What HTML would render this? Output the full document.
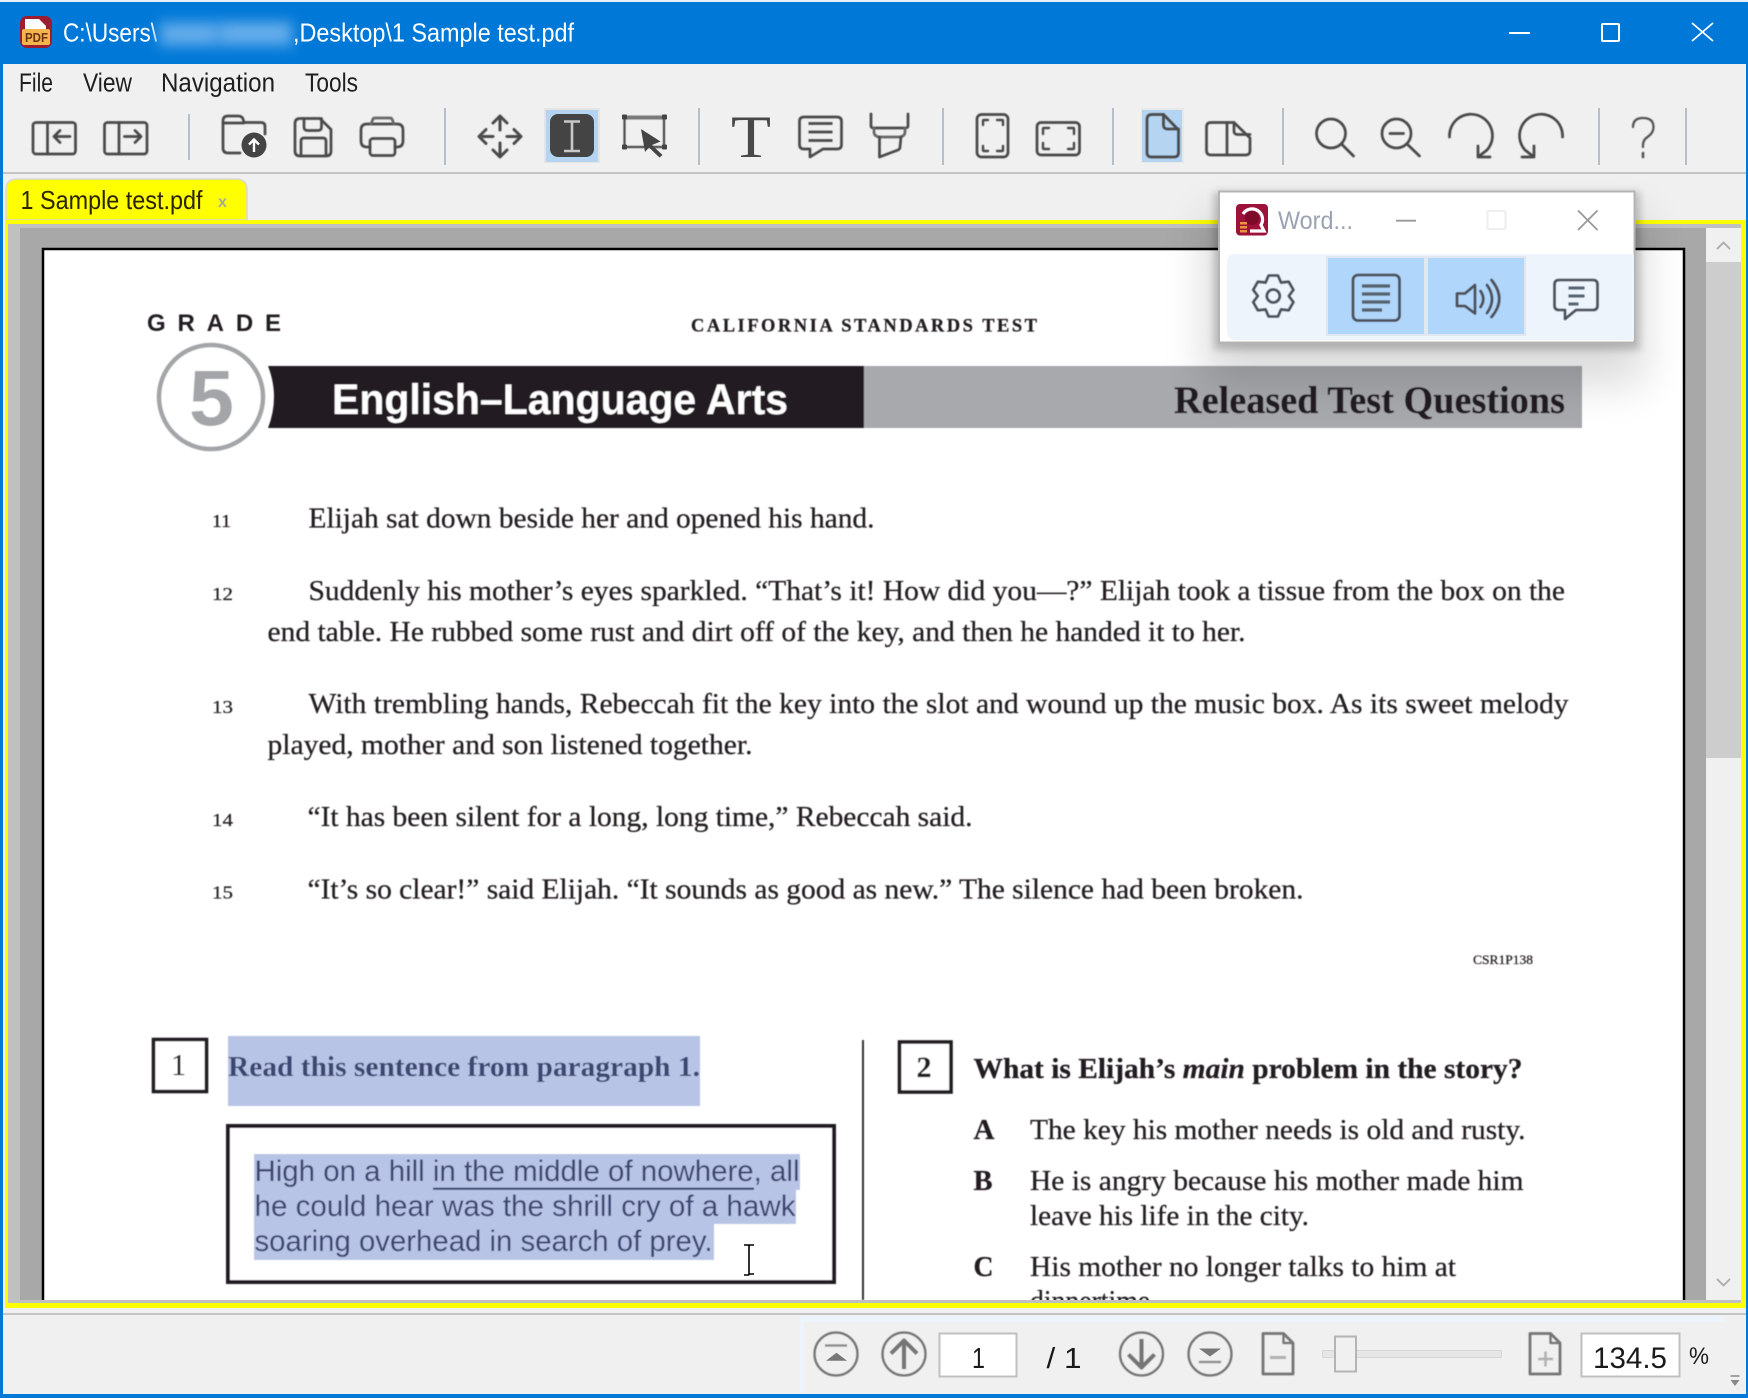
<!DOCTYPE html>
<html lang="en">
<head>
<meta charset="utf-8">
<title>1 Sample test.pdf</title>
<style>
html,body{margin:0;padding:0;width:1748px;height:1398px;overflow:hidden;background:#f0f0f0}
svg{display:block}
.ui{font-family:"Liberation Sans",sans-serif}
.se{font-family:"Liberation Serif",serif;fill:#231f20;stroke:#231f20;stroke-width:.25}
.sa{font-family:"Liberation Sans",sans-serif;fill:#231f20}
.ic{fill:none;stroke:#484848;stroke-width:2.7;stroke-linejoin:round;stroke-linecap:round}
.st{fill:none;stroke:#747474;stroke-width:2.3;stroke-linejoin:round}
.sep{stroke:#b6bfc9;stroke-width:2}
</style>
</head>
<body>
<svg xmlns="http://www.w3.org/2000/svg" width="1748" height="1398" viewBox="0 0 1748 1398">
<defs>
<filter id="b0" x="-5%" y="-5%" width="110%" height="110%"><feGaussianBlur stdDeviation="0.45"/></filter>
<filter id="b1" x="-20%" y="-20%" width="140%" height="140%"><feGaussianBlur stdDeviation="0.55"/></filter>
<filter id="b7" x="-20%" y="-50%" width="140%" height="200%"><feGaussianBlur stdDeviation="6"/></filter>
<filter id="b20" x="-30%" y="-50%" width="160%" height="200%"><feGaussianBlur stdDeviation="22"/></filter>
<filter id="b4" x="-10%" y="-20%" width="120%" height="140%"><feGaussianBlur stdDeviation="4"/></filter>
<clipPath id="view"><rect x="20" y="228" width="1686" height="1072"/></clipPath>
</defs>

<!-- window frame -->
<rect width="1748" height="1398" fill="#0078d7"/>
<rect x="3" y="64" width="1743" height="1330" fill="#f0f0f0"/>
<rect x="0" y="0" width="1748" height="2" fill="#e8f1fa"/>

<!-- title bar -->
<g>
<rect x="20" y="16" width="32" height="32" rx="7" fill="#9c1c30"/>
<path d="M25 19h14l7 7v6H25z" fill="#fff"/>
<rect x="22" y="29" width="28" height="16" rx="2" fill="#f5b44c"/>
<text class="ui" x="25" y="42" font-size="13" font-weight="700" fill="#6a3410" textLength="23" lengthAdjust="spacingAndGlyphs">PDF</text>
</g>
<text class="ui" x="63" y="41.5" font-size="26" fill="#fff" textLength="94" lengthAdjust="spacingAndGlyphs">C:\Users\</text>
<g filter="url(#b7)">
<rect x="158" y="20" width="136" height="28" fill="#3a98e4"/>
<rect x="165" y="27" width="50" height="14" fill="#66aeea"/>
<rect x="222" y="25" width="66" height="16" fill="#66aeea"/>
</g>
<text class="ui" x="293" y="41.5" font-size="26" fill="#fff" textLength="281" lengthAdjust="spacingAndGlyphs">,Desktop\1 Sample test.pdf</text>
<path d="M1509 33h21" stroke="#fff" stroke-width="2"/>
<rect x="1602" y="24" width="17" height="17" fill="none" stroke="#fff" stroke-width="2" rx="1"/>
<path d="M1692 23l21 18M1713 23l-21 18" stroke="#fff" stroke-width="1.8" fill="none"/>

<!-- menu -->
<g class="ui" font-size="25.5" fill="#1e1e1e">
<text x="19" y="91.5" textLength="34" lengthAdjust="spacingAndGlyphs">File</text>
<text x="83" y="91.5" textLength="49" lengthAdjust="spacingAndGlyphs">View</text>
<text x="161" y="91.5" textLength="114" lengthAdjust="spacingAndGlyphs">Navigation</text>
<text x="305" y="91.5" textLength="53" lengthAdjust="spacingAndGlyphs">Tools</text>
</g>

<!-- toolbar separators -->
<path class="sep" d="M189 114V160M445 108V165M699 108V165M943 108V165M1113 108V165M1283 108V165M1599 108V165M1686 108V165"/>
<rect x="3" y="172" width="1743" height="2" fill="#c4c4c4"/>

<!-- panel icons -->
<g class="ic" filter="url(#b0)">
<rect x="33" y="122.5" width="42.5" height="31.5" rx="3"/>
<path d="M47.5 122.5V154"/>
<path d="M70 136.5H54M60 130.5l-6 6 6 6"/>
<rect x="104.500" y="122.5" width="42.500" height="31.500" rx="3"/>
<path d="M119 122.5V154"/>
<path d="M124.500 136.500H141M135 130.500l6 6-6 6"/>
<!-- folder -->
<path d="M240 153H228q-5 0-5-5V121q0-5 5-5h10q4 0 5 3l1 3.500h17q4 0 4 4V134"/>
<path d="M223 123h21"/>
<!-- save -->
<path d="M300 118.500h20l11 11V151q0 5-5 5H300q-5 0-5-5V123.500q0-5 5-5z"/>
<path d="M304 118.500V127q0 3.500 3.500 3.500h10.500q3.500 0 3.500-3.500V118.500"/>
<path d="M301 155.500V141q0-3 3-3h19q3 0 3 3V155.500"/>
<!-- print -->
<path d="M370 147h-3q-6 0-6-6v-11q0-6 6-6h30q6 0 6 6v11q0 6-6 6h-2"/>
<path d="M371 124l2-5q.5-1 2-1h15q1.500 0 2 1l2 5" stroke="#666"/>
<rect x="370" y="138.500" width="25" height="17" rx="3"/>
<!-- move -->
<path d="M500 120V130M500 143V155M483 136.500H493M507 136.500H518" stroke-width="3"/>
<path d="M493 123l7-7 7 7M493 150l7 7 7-7M486 129.500l-7 7 7 7M514 129.500l7 7-7 7" stroke-width="3"/>
<!-- select -->
<path d="M624.500 117H664V147H624.500Z" stroke-width="2.2"/>
<path d="M625 117.500H664" stroke="#777" stroke-width="4"/>
<!-- chat -->
<path d="M804 117h33q4.500 0 4.500 4.500v23q0 4.500-4.500 4.500h-14l-13 8v-8h-6q-4.500 0-4.500-4.500v-23q0-4.500 4.500-4.500z"/>
<path d="M808.500 123.500h24M808.500 132h24M808.500 140.500h24" stroke-width="2.800" stroke-linecap="butt"/>
<!-- highlighter -->
<path d="M871 114V126q0 2 3 2H905q3 0 3-2V114"/>
<path d="M874 128v4q0 4 5 5H900q5-1 5-5v-4" stroke="#666"/>
<path d="M879.500 137V157L898 150q2-1 2-3l1-10" />
<!-- fit page -->
<rect x="977" y="114.500" width="31" height="42.500" rx="4.500"/>
<path d="M983 125v-4q0-1 1-1h4M997 120h5q1 0 1 1v4M983 146v4q0 1 1 1h4M997 151h5q1 0 1-1v-4" stroke-width="2.400"/>
<!-- fit width -->
<rect x="1037" y="122.500" width="42.500" height="32.500" rx="4"/>
<path d="M1043 134v-5q0-1 1-1h5M1068 128h5q1 0 1 1v5M1043 143v5q0 1 1 1h5M1068 149h5q1 0 1-1v-5" stroke-width="2.400"/>
</g>
<circle cx="254" cy="145" r="12.500" fill="#444"/>
<path d="M254 152v-12M249 144.500l5-5 5 5" stroke="#fff" stroke-width="2.400" fill="none"/>

<!-- I tool -->
<rect x="544" y="108" width="56" height="55" fill="#e4e4e4"/>
<rect x="546" y="110" width="52" height="52" fill="#b4d4f2"/>
<rect x="550" y="114" width="44" height="43" rx="8" fill="#444"/>
<path d="M564 121.500h16M564 151h16M572 121.500V151" stroke="#c8c8c8" stroke-width="2.600" fill="none"/>
<!-- select arrow + handles -->
<path d="M641 129L660.500 141.500 652 145 662.500 155 659.500 157.500 649 147.500 645 152z" fill="#444"/>
<g fill="#444"><rect x="622" y="114.500" width="5" height="5" rx="1"/><rect x="662" y="114.500" width="5" height="5" rx="1"/><rect x="622" y="144.500" width="5" height="5" rx="1"/><rect x="662" y="144.500" width="5" height="5" rx="1"/></g>
<!-- T -->
<text x="731" y="157" font-family="Liberation Serif,serif" font-size="60" fill="#484848" textLength="40" lengthAdjust="spacingAndGlyphs">T</text>

<!-- single page -->
<rect x="1141" y="108" width="43" height="55" fill="#e6e8ea"/>
<rect x="1142" y="110" width="40" height="52" fill="#b4d4f2"/>
<g class="ic" filter="url(#b0)">
<path d="M1152 114.500h11.500L1178.500 130v22.500q0 4.500-4.500 4.500H1151.500q-4.500 0-4.500-4.500V119.500q0-5 5-5z"/>
<path d="M1163.500 114.500V125q0 4 4 4h11"/>
<!-- double page -->
<path d="M1211 122.500h23L1250 138v12.500q0 4.500-4.500 4.500H1211q-4.500 0-4.500-4.500V127q0-4.500 4.500-4.500z"/>
<path d="M1227 122.500V155"/>
<path d="M1234 122.500V131q0 3.500 3.500 3.500H1250"/>
<!-- zoom in/out -->
<circle cx="1331" cy="133.500" r="14.500"/><path d="M1341.500 144L1353.500 156"/>
<circle cx="1396.500" cy="133.500" r="14.500"/><path d="M1407 144L1419.500 156M1390 133.500h13.500"/>
<!-- rotate -->
<path d="M1449.500 137A21.500 21.500 0 1 1 1487 150L1478 157M1478 146V157H1490"/>
<path d="M1562.500 137A21.500 21.500 0 1 0 1525 150L1534 157M1534 146V157H1522"/>
<!-- help -->
<path d="M1633 127q0-9 10-9 10.500 0 10.500 9 0 6-6 10-4.500 3-4.500 8v2" stroke="#555" stroke-width="2.300"/>
<path d="M1643 153v4" stroke="#555" stroke-width="2.600"/>
</g>

<!-- tab -->
<path d="M6 220V190q0-11 11-11H236q11 0 11 11v30z" fill="#ffff00" stroke="#d8d8d8" stroke-width="1.500"/>
<text class="ui" x="20.500" y="209" font-size="26" fill="#2a2400" textLength="182" lengthAdjust="spacingAndGlyphs">1 Sample test.pdf</text>
<text class="ui" x="218" y="207" font-size="16" font-weight="700" fill="#a8a898" textLength="9" lengthAdjust="spacingAndGlyphs">x</text>

<!-- document frame -->
<rect x="5" y="220" width="1741" height="88" fill="#ffff00"/>
<rect x="5" y="220" width="3" height="1088" fill="#ffff00"/>
<rect x="1741" y="220" width="5" height="1088" fill="#ffff00"/>
<rect x="5" y="1303" width="1741" height="5" fill="#ffff00"/>
<rect x="8" y="224" width="1733" height="1079" fill="#c0c0c0"/>
<rect x="20" y="228" width="1686" height="1072" fill="#a8a8a8"/>

<!-- scrollbar -->
<rect x="1706" y="228" width="35" height="1072" fill="#f0f0f0"/>
<rect x="1706" y="262" width="35" height="496" fill="#cdcdcd"/>
<path d="M1717 249l6.500-6.500 6.500 6.500" fill="none" stroke="#b0b0b0" stroke-width="2"/>
<path d="M1717 1279l6.500 6.500 6.500-6.500" fill="none" stroke="#b0b0b0" stroke-width="2"/>

<!-- page -->
<g clip-path="url(#view)">
<rect x="43" y="249" width="1641" height="1100" fill="#fff" stroke="#000" stroke-width="2.500"/>
<g filter="url(#b1)">
<text class="sa" x="147" y="331" font-size="24" font-weight="700" textLength="134" lengthAdjust="spacing">GRADE</text>
<text class="se" x="691" y="331.500" font-size="18.500" font-weight="700" textLength="346" lengthAdjust="spacing">CALIFORNIA STANDARDS TEST</text>

<circle cx="211" cy="397" r="52" fill="#fff" stroke="#a3a5a8" stroke-width="4.500"/>
<text x="189" y="425" font-family="Liberation Sans,sans-serif" font-size="79" font-weight="700" fill="#a3a5a8" textLength="45" lengthAdjust="spacingAndGlyphs">5</text>
<path d="M268 366H864V428H268Q280 397 268 366Z" fill="#231f20"/>
<rect x="864" y="366" width="718" height="62" fill="#a7a9ac"/>
<text x="332" y="414" font-family="Liberation Sans,sans-serif" font-size="43" font-weight="700" fill="#fff" textLength="456" lengthAdjust="spacingAndGlyphs">English–Language Arts</text>
<text class="se" x="1174" y="413" font-size="39" font-weight="700" textLength="391" lengthAdjust="spacingAndGlyphs">Released Test Questions</text>

<g font-size="28">
<text class="se" x="212" y="527" font-size="18" textLength="19" lengthAdjust="spacingAndGlyphs">11</text>
<text class="se" x="308.500" y="527.700" textLength="566" lengthAdjust="spacingAndGlyphs">Elijah sat down beside her and opened his hand.</text>
<text class="se" x="212" y="600" font-size="18" textLength="21" lengthAdjust="spacingAndGlyphs">12</text>
<text class="se" x="308.500" y="600" textLength="1256.500" lengthAdjust="spacingAndGlyphs">Suddenly his mother’s eyes sparkled. “That’s it! How did you—?” Elijah took a tissue from the box on the</text>
<text class="se" x="267.500" y="641" textLength="978" lengthAdjust="spacingAndGlyphs">end table. He rubbed some rust and dirt off of the key, and then he handed it to her.</text>
<text class="se" x="212" y="713" font-size="18" textLength="21" lengthAdjust="spacingAndGlyphs">13</text>
<text class="se" x="308.500" y="713" textLength="1260" lengthAdjust="spacingAndGlyphs">With trembling hands, Rebeccah fit the key into the slot and wound up the music box. As its sweet melody</text>
<text class="se" x="267.500" y="754" textLength="485" lengthAdjust="spacingAndGlyphs">played, mother and son listened together.</text>
<text class="se" x="212" y="826" font-size="18" textLength="21" lengthAdjust="spacingAndGlyphs">14</text>
<text class="se" x="307.500" y="826" textLength="665" lengthAdjust="spacingAndGlyphs">“It has been silent for a long, long time,” Rebeccah said.</text>
<text class="se" x="212" y="898.500" font-size="18" textLength="21" lengthAdjust="spacingAndGlyphs">15</text>
<text class="se" x="307.500" y="898.500" textLength="996" lengthAdjust="spacingAndGlyphs">“It’s so clear!” said Elijah. “It sounds as good as new.” The silence had been broken.</text>
</g>
<text class="se" x="1473" y="964" font-size="13" textLength="60" lengthAdjust="spacingAndGlyphs">CSR1P138</text>

<!-- question 1 -->
<rect x="153.500" y="1039.500" width="53" height="52" fill="#fff" stroke="#231f20" stroke-width="3.600"/>
<text class="se" x="171" y="1075" font-size="31" stroke-width=".6" textLength="15" lengthAdjust="spacingAndGlyphs">1</text>
<rect x="228" y="1036" width="472" height="70" fill="#b8c4e6"/>
<text x="228" y="1076" font-family="Liberation Serif,serif" font-size="29" font-weight="700" fill="#3a4670" textLength="472" lengthAdjust="spacingAndGlyphs">Read this sentence from paragraph 1.</text>
<rect x="228" y="1126" width="606" height="156" fill="#fff" stroke="#231f20" stroke-width="4"/>
<path d="M254 1154H800V1190H796V1224H714V1260H254Z" fill="#b8c4e6"/>
<g font-family="Liberation Sans,sans-serif" font-size="30" fill="#3a4570">
<text x="254.500" y="1181" textLength="545" lengthAdjust="spacingAndGlyphs">High on a hill in the middle of nowhere, all</text>
<text x="254.500" y="1216" textLength="541" lengthAdjust="spacingAndGlyphs">he could hear was the shrill cry of a hawk</text>
<text x="254.500" y="1251" textLength="458" lengthAdjust="spacingAndGlyphs">soaring overhead in search of prey.</text>
</g>
<path d="M433 1188.700H754" stroke="#2f3b66" stroke-width="2"/>
<path d="M863 1040V1300" stroke="#231f20" stroke-width="1.800"/>

<!-- question 2 -->
<rect x="899.500" y="1042" width="51.500" height="50" fill="#fff" stroke="#231f20" stroke-width="3.600"/>
<text class="se" x="916.500" y="1077" font-size="30" font-weight="700" textLength="15" lengthAdjust="spacingAndGlyphs">2</text>
<text class="se" x="973.500" y="1078" font-size="29" font-weight="700" textLength="549" lengthAdjust="spacingAndGlyphs">What is Elijah’s <tspan font-style="italic">main</tspan> problem in the story?</text>
<g font-size="29">
<text class="se" x="973.500" y="1139" font-weight="700" textLength="21" lengthAdjust="spacingAndGlyphs">A</text>
<text class="se" x="1030" y="1139" textLength="495.500" lengthAdjust="spacingAndGlyphs">The key his mother needs is old and rusty.</text>
<text class="se" x="973.500" y="1190" font-weight="700" textLength="19" lengthAdjust="spacingAndGlyphs">B</text>
<text class="se" x="1030" y="1190" textLength="493.500" lengthAdjust="spacingAndGlyphs">He is angry because his mother made him</text>
<text class="se" x="1030" y="1225" textLength="279" lengthAdjust="spacingAndGlyphs">leave his life in the city.</text>
<text class="se" x="973.500" y="1276" font-weight="700" textLength="20" lengthAdjust="spacingAndGlyphs">C</text>
<text class="se" x="1030" y="1276" textLength="426" lengthAdjust="spacingAndGlyphs">His mother no longer talks to him at</text>
<text class="se" x="1030" y="1310" textLength="127" lengthAdjust="spacingAndGlyphs">dinnertime.</text>
</g>
</g>
<!-- cursor -->
<path d="M745 1245h4.500q.5 0 .5 1v29q0-1 .5-1h4.500M745 1275h4.500q.5 0 .5-1V1246q0 1 .5-1h4.500" transform="translate(-1 0)" stroke="#000" stroke-width="1.600" fill="none"/>
</g>

<!-- bottom area -->
<rect x="3" y="1308" width="1743" height="5" fill="#f0f0f0"/>
<rect x="3" y="1313" width="1743" height="2" fill="#c4c4c4"/>
<rect x="802" y="1316" width="922" height="76" rx="6" fill="#f0f0f0"/>
<rect x="802" y="1316" width="922" height="6" fill="#eef4fb"/>
<rect x="800" y="1316" width="4" height="76" fill="#eef4fb"/>

<g class="st" filter="url(#b0)">
<circle cx="836" cy="1354" r="21.500"/>
<circle cx="904" cy="1354" r="21.500"/>
<circle cx="1141.500" cy="1354" r="21.500"/>
<circle cx="1210" cy="1354" r="21.500"/>
<path d="M825 1345.500h22" stroke="#8a8a8a"/>
<path d="M1199 1362h22" stroke="#8a8a8a"/>
<path d="M904 1369V1342M891 1353.500l13-13 13 13" stroke-width="4"/>
<path d="M1141.500 1339V1366M1128.500 1354.500l13 13 13-13" stroke-width="4"/>
<path d="M1268 1333.500h15.500l9.500 9.500v31h-30v-40.500z" stroke-width="2.800"/>
<path d="M1283.500 1333.500v9.500h9.500" />
<path d="M1270 1357.500h16" stroke="#b0b0b0" stroke-width="3"/>
<path d="M1535 1333.500h15.500l9.500 9.500v31h-30v-40.500z" stroke-width="2.800"/>
<path d="M1550.500 1333.500v9.500h9.500" />
<path d="M1538 1359h15M1545.500 1351.500v15" stroke="#b0b0b0" stroke-width="2.500"/>
</g>
<path d="M826 1360.700h21l-10.500-8z" fill="#777"/>
<path d="M1199 1348.500h22l-11 8z" fill="#777"/>

<rect x="939.500" y="1333.500" width="77" height="43" fill="#fff" stroke="#c0c0c0" stroke-width="2"/>
<text class="ui" x="972" y="1368" font-size="29" fill="#1a1a1a" textLength="13" lengthAdjust="spacingAndGlyphs">1</text>
<text class="ui" x="1046.500" y="1368" font-size="29" fill="#1a1a1a" textLength="35" lengthAdjust="spacingAndGlyphs">/ 1</text>

<rect x="1322.500" y="1350.500" width="179" height="7" fill="#e6e6e6" stroke="#d6d6d6"/>
<rect x="1335" y="1336.500" width="21" height="35" fill="#f0f0f0" stroke="#b4b4b4" stroke-width="2"/>

<rect x="1581.500" y="1333.500" width="98" height="43" fill="#fff" stroke="#c0c0c0" stroke-width="2"/>
<text class="ui" x="1593" y="1368" font-size="30" fill="#1a1a1a" textLength="74" lengthAdjust="spacingAndGlyphs">134.5</text>
<text class="ui" x="1689" y="1364" font-size="24" fill="#1a1a1a" textLength="20" lengthAdjust="spacingAndGlyphs">%</text>
<path d="M1730.500 1376h9" stroke="#888" stroke-width="1.500"/>
<path d="M1730.500 1380h9l-4.500 6z" fill="#888"/>

<!-- floating window shadow -->
<rect x="1205" y="215" width="440" height="170" fill="#000" opacity="0.14" filter="url(#b20)"/>
<rect x="1214" y="192" width="426" height="158" fill="#000" opacity="0.2" filter="url(#b4)"/>
<!-- floating window -->
<rect x="1219" y="191.500" width="415.500" height="151" fill="#fff" stroke="#b4b4b4" stroke-width="2"/>
<path d="M1236 254H1634V340H1236q-9 0-9-9V263q0-9 9-9z" fill="#edf4fc"/>
<rect x="1236" y="204" width="32" height="31.500" rx="4" fill="#9d1239"/>
<circle cx="1252" cy="218" r="7" fill="#7d0a28"/>
<path d="M1243 214A10.500 10.500 0 1 1 1261 225L1264 231H1250" fill="none" stroke="#fff" stroke-width="3.200"/>
<g fill="#e8963c"><rect x="1240" y="222" width="7" height="2.500"/><rect x="1240" y="226" width="7" height="2.500"/><rect x="1240" y="230" width="7" height="2.500"/></g>
<text class="ui" x="1278" y="229" font-size="25" fill="#9aa2b4" textLength="75" lengthAdjust="spacingAndGlyphs">Word...</text>
<path d="M1396 220.700h20" stroke="#999" stroke-width="1.800"/>
<rect x="1487.500" y="211" width="18" height="18" fill="none" stroke="#eeeeee" stroke-width="2" rx="1"/>
<path d="M1578 210.500l19.500 19.500M1597.500 210.500L1578 230" stroke="#999" stroke-width="1.800" fill="none"/>

<rect x="1326" y="256" width="100" height="80" fill="#e0e7ef"/>
<rect x="1426" y="256" width="100" height="80" fill="#e0e7ef"/>
<rect x="1328" y="258" width="96" height="76" fill="#b1d6fc"/>
<rect x="1428" y="258" width="96" height="76" fill="#b1d6fc"/>

<g fill="none" stroke="#4a5058" stroke-width="2.600" stroke-linejoin="round" stroke-linecap="round" filter="url(#b0)">
<g transform="translate(1273.300 296)">
<path d="M-4.700-20.500L4.700-20.500 7.750-13.400 15.400-14.300 20.100-6.100 15.500 0 20.100 6.100 15.400 14.300 7.750 13.400 4.700 20.500-4.700 20.500-7.750 13.400-15.400 14.300-20.100 6.100-15.500 0-20.100-6.100-15.400-14.300-7.750-13.400Z"/>
<circle r="6.500"/>
</g>
<rect x="1353" y="275" width="46.500" height="45.500" rx="5"/>
<path d="M1362 286h28M1362 294h28M1362 302h28M1362 310h20" stroke="#55636f" stroke-width="3.200" stroke-linecap="butt"/>
<path d="M1457 293.500h8l10-8.500v28.500l-10-7.500h-8z"/>
<path d="M1480.500 291Q1486 299 1480.500 307M1487 285Q1497 299 1487 313M1491.500 280Q1507 299 1491.500 317"/>
<path d="M1559 280h34q4.500 0 4.500 4.500v21q0 4.500-4.500 4.500h-17l-11 9v-9h-6q-4.500 0-4.500-4.500v-21q0-4.500 4.500-4.500z"/>
<path d="M1568.500 288h16M1568.500 296h16M1568.500 304h10" stroke="#55636f" stroke-width="3" stroke-linecap="butt"/>
</g>
</svg>
</body>
</html>
